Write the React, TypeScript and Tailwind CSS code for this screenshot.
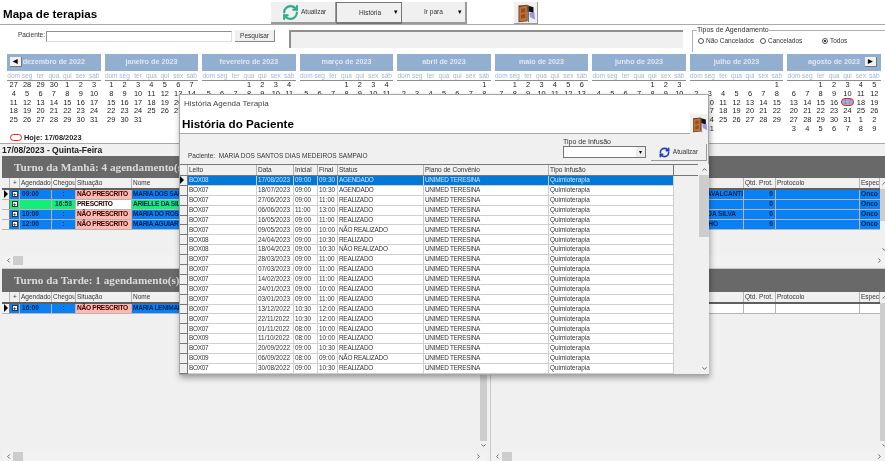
import { ChevronDown, ChevronLeft, ChevronRight, ChevronUp, RefreshCw } from 'lucide-react';

const MONTH_NAMES = ['janeiro', 'fevereiro', 'março', 'abril', 'maio', 'junho', 'julho', 'agosto', 'setembro', 'outubro', 'novembro', 'dezembro'];
const WEEK_DAYS = ['dom', 'seg', 'ter', 'qua', 'qui', 'sex', 'sáb'];
const CALENDAR = [
  [2022, 11],
  [2023, 0],
  [2023, 1],
  [2023, 2],
  [2023, 3],
  [2023, 4],
  [2023, 5],
  [2023, 6],
  [2023, 7],
];

const HISTORY = [
  ['BOX08', '17/08/2023', '09:00', '09:30', 'AGENDADO'],
  ['BOX07', '18/07/2023', '09:00', '10:30', 'AGENDADO'],
  ['BOX07', '27/06/2023', '09:00', '11:00', 'REALIZADO'],
  ['BOX07', '06/06/2023', '11:00', '13:00', 'REALIZADO'],
  ['BOX07', '16/05/2023', '09:00', '11:00', 'REALIZADO'],
  ['BOX07', '09/05/2023', '09:00', '10:00', 'NÃO REALIZADO'],
  ['BOX08', '24/04/2023', '09:00', '10:30', 'REALIZADO'],
  ['BOX08', '18/04/2023', '09:00', '10:30', 'NÃO REALIZADO'],
  ['BOX07', '28/03/2023', '09:00', '11:00', 'REALIZADO'],
  ['BOX07', '07/03/2023', '09:00', '11:00', 'REALIZADO'],
  ['BOX07', '14/02/2023', '09:00', '11:00', 'REALIZADO'],
  ['BOX07', '24/01/2023', '09:00', '10:00', 'REALIZADO'],
  ['BOX07', '03/01/2023', '09:00', '11:00', 'REALIZADO'],
  ['BOX07', '13/12/2022', '10:30', '12:00', 'REALIZADO'],
  ['BOX07', '22/11/2022', '10:30', '12:00', 'REALIZADO'],
  ['BOX07', '01/11/2022', '08:00', '10:00', 'REALIZADO'],
  ['BOX09', '11/10/2022', '08:00', '10:00', 'REALIZADO'],
  ['BOX07', '20/09/2022', '09:00', '10:30', 'REALIZADO'],
  ['BOX09', '06/09/2022', '08:00', '09:00', 'NÃO REALIZADO'],
  ['BOX07', '30/08/2022', '09:00', '10:30', 'REALIZADO'],
];

// column width + type for the history grid (caps are set tighter, as in the original font)
const HISTORY_COLS = [
  'w-[69px] tracking-[-0.25px]',
  'w-[37px]',
  'w-[24px]',
  'w-[20px]',
  'w-[86px] tracking-[-0.25px]',
  'w-[125px] tracking-[-0.25px]',
  'w-[125px]',
];

const MORNING = [
  { time: '09:00', arrived: ':', status: 'NÃO PRESCRITO', name: 'MARIA DOS SANTOS', tail: 'AVALCANTI', tailClass: '', current: true },
  { time: '', arrived: '16:53', status: 'PRESCRITO', name: 'ARIELLE DA SILVA', tail: '', tailClass: '', done: true },
  { time: '10:00', arrived: ':', status: 'NÃO PRESCRITO', name: 'MARIA DO ROSARIO', tail: 'DA SILVA', tailClass: 'pr-[7px]' },
  { time: '12:00', arrived: ':', status: 'NÃO PRESCRITO', name: 'MARIA AGUIAR', tail: 'HO', tailClass: 'pr-[25px]' },
];

function monthCells(year: number, month: number) {
  const first = new Date(year, month, 1).getDay();
  const total = new Date(year, month + 1, 0).getDate();
  const isFirst = year === 2022;
  const isLast = month === 7;
  const cells: string[] = [];
  const prevTotal = new Date(year, month, 0).getDate();
  for (let i = 0; i < first; i++) cells.push(isFirst ? String(prevTotal - first + i + 1) : '');
  for (let d = 1; d <= total; d++) cells.push(String(d));
  let next = 1;
  while (cells.length < 42) cells.push(isLast ? String(next++) : '');
  return cells;
}

function Door({ className }: { className: string }) {
  return (
    <svg viewBox="0 0 24 24" className={className}>
      <path d="M3 3 L14 2 L14 22 L3 23 Z" fill="#6a3d22" />
      <path d="M4 5 L13 3 L13 21 L4 22 Z" fill="#c96f3a" />
      <path d="M6 7 L11 6 L11 11 L6 12 Z M6 14 L11 13 L11 18 L6 19 Z" fill="#93501f" />
      <path d="M14 3 L21 5 L21 12 L14 10 Z" fill="#111" />
      <path d="M16 12 L22 11 L23 20 L17 17 Z" fill="#9a9ad6" />
      <path d="M15 3 L15 23" stroke="#555" strokeWidth="1" />
    </svg>
  );
}

function MonthCard({ year, month, index }: { year: number; month: number; index: number }) {
  const today = month === 7;
  return (
    <div className="flex flex-col">
      <div className="relative flex h-[17px] items-center justify-center bg-[#93afd0] text-[7.2px] font-bold text-[#dfe8f2]">
        {index === 0 && (
          <span className="absolute left-[3px] top-[3px] flex h-[10px] w-[12px] items-center justify-center border-r border-b border-[#777] bg-[#f0f0f0] text-[6px] text-black">◀</span>
        )}
        {MONTH_NAMES[month]} de {year}
        {index === 8 && (
          <span className="absolute right-[4px] top-[3px] flex h-[10px] w-[12px] items-center justify-center border-r border-b border-[#777] bg-[#f0f0f0] text-[6px] text-black">▶</span>
        )}
      </div>
      <div className="mt-[1px] grid h-[9px] grid-cols-7 items-center border-b border-[#8d8d8d] pt-[1px] text-center text-[6.5px] leading-none text-[#a3b7d3]">
        {WEEK_DAYS.map((d) => (
          <span key={d}>{d}</span>
        ))}
      </div>
      <div className="grid grid-cols-7 text-center text-[7.4px] leading-[8.8px] text-[#222]">
        {monthCells(year, month).map((d, i) => {
          const isToday = today && d === '17' && i < 28;
          return (
            <span key={i} className="relative h-[8.8px]">
              {isToday ? (
                <span className="absolute left-[0px] right-[0px] top-[-0.5px] flex h-[8px] items-center justify-center rounded-full border border-[#e8202a] bg-[#9ab3d6] text-[#6a85b0]">{d}</span>
              ) : (
                d
              )}
            </span>
          );
        })}
      </div>
    </div>
  );
}

function HScroll() {
  return (
    <div className="flex h-[10px] shrink-0 items-center bg-[#f2f2f2] text-[#555]">
      <ChevronLeft className="ml-[3px] h-[7px] w-[7px] shrink-0" strokeWidth={3} />
      <div className="ml-[1px] h-[9px] w-[10px] shrink-0 bg-[#cdcdcd]" />
      <div className="flex-1" />
      <ChevronRight className="mr-[5px] h-[7px] w-[7px] shrink-0" strokeWidth={3} />
    </div>
  );
}

function VScroll({ thumbClass, widthClass }: { thumbClass: string; widthClass: string }) {
  return (
    <div className={`flex shrink-0 flex-col items-center bg-[#f0f0f0] text-[#555] ${widthClass}`}>
      <ChevronUp className="mt-[2px] h-[7px] w-[7px] shrink-0" strokeWidth={3} />
      <div className={`mt-[2px] w-full shrink-0 bg-[#cdcdcd] ${thumbClass}`} />
      <div className="flex-1" />
      <ChevronDown className="mb-[2px] h-[7px] w-[7px] shrink-0" strokeWidth={3} />
    </div>
  );
}

function HeaderCell({ className, children }: { className: string; children?: React.ReactNode }) {
  return <div className={`flex h-full shrink-0 items-center overflow-hidden border-r border-[#b5b5b5] bg-[#f0f0f0] pl-[1px] text-[6.5px] whitespace-nowrap text-[#333] ${className}`}>{children}</div>;
}

function Pointer() {
  return <span className="block h-0 w-0 border-y-[4px] border-l-[4px] border-y-transparent border-l-black" />;
}

function Expander() {
  return (
    <span className="flex h-[6px] w-[6px] items-center justify-center border border-[#333] bg-white text-[6px] font-bold leading-none text-black">+</span>
  );
}

function LeftGridHeader() {
  return (
    <div className="flex h-[12px] shrink-0 border-b-2 border-[#5f5f5f]">
      <HeaderCell className="w-[8px]" />
      <HeaderCell className="w-[10px] justify-center">+</HeaderCell>
      <HeaderCell className="w-[32px]">Agendado</HeaderCell>
      <HeaderCell className="w-[24px]">Chegou</HeaderCell>
      <HeaderCell className="w-[56px]">Situação</HeaderCell>
      <HeaderCell className="flex-1">Nome</HeaderCell>
    </div>
  );
}

function LeftRow({ row }: { row: { time: string; arrived: string; status: string; name: string; current?: boolean; done?: boolean } }) {
  const fill = row.done ? 'bg-[#14ee78]' : 'bg-[#0a80f5]';
  return (
    <div className="flex h-[9.9px] shrink-0 border-b border-[#b5b5b5] text-[6.6px] leading-none font-bold tracking-[-0.3px] whitespace-nowrap text-[#04204f]">
      <div className="flex w-[8px] shrink-0 items-center justify-center border-r border-[#777] bg-[#f0f0f0]">{row.current && <Pointer />}</div>
      <div className={`flex w-[10px] shrink-0 items-center justify-center border-r border-[#b5b5b5] ${fill}`}>
        <Expander />
      </div>
      <div className={`flex w-[32px] shrink-0 items-center border-r border-[#b5b5b5] pl-[2px] tracking-normal ${fill}`}>{row.time}</div>
      <div className={`flex w-[24px] shrink-0 items-center justify-center border-r border-[#b5b5b5] tracking-normal ${fill}`}>{row.arrived}</div>
      <div className={`flex w-[56px] shrink-0 items-center border-r border-[#b5b5b5] pl-[1px] text-[#300] ${row.done ? 'bg-white' : 'bg-[#ffb7ae]'}`}>{row.status}</div>
      <div className={`flex flex-1 items-center pl-[1px] ${fill}`}>{row.name}</div>
    </div>
  );
}

function RightGridHeader() {
  return (
    <div className="flex h-[12px] shrink-0 border-b-2 border-[#5f5f5f]">
      <HeaderCell className="w-[253px]" />
      <HeaderCell className="w-[32px]">Qtd. Prot.</HeaderCell>
      <HeaderCell className="w-[84px]">Protocolo</HeaderCell>
      <HeaderCell className="flex-1">Espec</HeaderCell>
    </div>
  );
}

function RightRow({ tail, tailClass, empty }: { tail?: string; tailClass?: string; empty?: boolean }) {
  const fill = empty ? 'bg-white' : 'bg-[#0a80f5]';
  return (
    <div className="flex h-[9.9px] shrink-0 border-b border-[#b5b5b5] text-[6.6px] leading-none font-bold text-[#04204f]">
      <div className={`flex w-[253px] shrink-0 items-center justify-end border-r border-[#b5b5b5] tracking-[-0.1px] ${fill} ${tailClass}`}>{tail}</div>
      <div className={`flex w-[32px] shrink-0 items-center justify-end border-r border-[#b5b5b5] pr-[2px] ${fill}`}>{!empty && '0'}</div>
      <div className={`w-[84px] shrink-0 border-r border-[#b5b5b5] ${fill}`} />
      <div className={`flex flex-1 items-center pl-[1px] ${fill}`}>{!empty && 'Onco'}</div>
    </div>
  );
}

function ShiftBar({ title, className }: { title?: string; className: string }) {
  return (
    <div className={`flex shrink-0 items-center bg-[#696969] pl-[12px] font-['Liberation_Serif'] text-[11.2px] font-bold whitespace-nowrap text-[#dcdcdc] ${className}`}>{title}</div>
  );
}

function HistoryModal() {
  return (
    <div className="absolute left-[179px] top-[94px] flex h-[281px] w-[530px] flex-col border border-[#a5a5a5] bg-[#f0f0f0] shadow-[1px_3px_6px_rgba(0,0,0,0.35)]">
      <div className="relative h-[39px] shrink-0 border-b border-[#a9a9a9] bg-white">
        <div className="pl-[4px] pt-[4px] text-[8px] leading-[10px] text-[#444]">História Agenda Terapia</div>
        <div className="pl-[2px] pt-[7px] text-[11.65px] leading-[15px] font-bold text-black">História do Paciente</div>
        <div className="absolute right-0 top-[19px] flex h-[20px] w-[18px] items-center justify-center bg-[#f0f0f0]">
          <Door className="h-[17px] w-[17px]" />
        </div>
      </div>
      <div className="flex h-[30px] shrink-0">
        <div className="flex w-[383px] items-end pb-[5px] pl-[8px] text-[6.5px] leading-none text-[#333]">
          Paciente:&nbsp; MARIA DOS SANTOS DIAS MEDEIROS SAMPAIO
        </div>
        <div className="flex flex-col pt-[3px]">
          <span className="text-[7px] leading-[9px] text-[#333]">Tipo de Infusão</span>
          <div className="flex h-[12px] w-[83px] justify-end border border-[#777] bg-white">
            <span className="flex w-[9px] items-center justify-center bg-[#ededed] text-[6px] text-black">▾</span>
          </div>
        </div>
        <div className="ml-[5px] mt-[10px] flex h-[17px] w-[56px] items-center justify-center gap-[3px] border-r border-b border-[#9a9a9a] text-[6.5px] text-[#333]">
          <RefreshCw className="h-[11px] w-[11px] text-[#1b3fb5]" strokeWidth={3.5} />
          Atualizar
        </div>
      </div>
      <div className="flex min-h-0 flex-1">
        <div className="flex w-[518px] shrink-0 flex-col">
          <div className="flex h-[12px] shrink-0 border-y border-[#777]">
            <HeaderCell className="w-[8px]" />
            <HeaderCell className="w-[69px]">Leito</HeaderCell>
            <HeaderCell className="w-[37px]">Data</HeaderCell>
            <HeaderCell className="w-[24px]">Inicial</HeaderCell>
            <HeaderCell className="w-[20px]">Final</HeaderCell>
            <HeaderCell className="w-[86px]">Status</HeaderCell>
            <HeaderCell className="w-[125px]">Plano de Convênio</HeaderCell>
            <HeaderCell className="w-[125px] !border-r-[#777]">Tipo Infusão</HeaderCell>
          </div>
          {HISTORY.map((row, i) => (
            <div key={i} className="flex h-[9.9px] shrink-0 text-[6.4px] leading-none">
              <div className="flex w-[8px] shrink-0 items-center border-r border-b border-[#777] bg-[#f0f0f0]">{i === 0 && <Pointer />}</div>
              <div className={`flex shrink-0 ${i === 0 ? 'bg-[#0078d7] text-[#cfe4f7]' : 'bg-white text-[#333]'}`}>
                {[...row, 'UNIMED TERESINA', 'Quimioterapia'].map((cell, j) => (
                  <div key={j} className={`flex items-center border-r border-b border-[#cfcfcf] pl-[1px] whitespace-nowrap ${HISTORY_COLS[j]}`}>
                    {cell}
                  </div>
                ))}
              </div>
            </div>
          ))}
        </div>
        <div className="ml-[1px] flex flex-1 justify-end">
          <VScroll widthClass="w-[10px]" thumbClass="h-[62px]" />
        </div>
      </div>
    </div>
  );
}

export default function App() {
  return (
    <div className="relative flex h-[461px] w-[885px] flex-col overflow-hidden bg-[#f0f0f0] font-['Liberation_Sans',sans-serif] [filter:blur(0.3px)]">
      <div className="flex h-[25px] shrink-0 border-b border-[#a9a9a9] bg-white">
        <div className="w-[271px] pl-[3px] pt-[7px] text-[11.6px] leading-[14px] font-bold text-black">Mapa de terapias</div>
        <div className="mt-[2px] flex w-[65px] items-center gap-[2px] border-r border-b-2 border-[#9a9a9a] bg-[#f0f0f0] pl-[11px] text-[6.5px] text-[#333]">
          <RefreshCw className="h-[17px] w-[17px] shrink-0 text-[#2cae8c]" strokeWidth={3} />
          Atualizar
        </div>
        <div className="mt-[2px] flex w-[66px] items-center justify-between border border-b-2 border-[#777] bg-[#f0f0f0] pl-[22px] pr-[3px] text-[6.5px] text-[#333]">
          História <span className="text-[7px] text-black">▾</span>
        </div>
        <div className="mt-[2px] flex w-[65px] items-center justify-between border-r-2 border-b-2 border-[#9a9a9a] bg-[#f0f0f0] pl-[22px] pr-[3px] text-[6.5px] text-[#333]">
          Ir para <span className="text-[7px] text-black">▾</span>
        </div>
        <div className="ml-[47px] mt-[2px] flex h-[22px] w-[24px] items-center justify-center border-r border-b border-[#9a9a9a] bg-[#f0f0f0]">
          <Door className="h-[20px] w-[20px]" />
        </div>
      </div>

      <div className="flex h-[28px] shrink-0 bg-white text-[6.5px] text-[#333]">
        <div className="flex h-[17px] w-[46px] items-center justify-end pt-[3px] pr-[1px]">Paciente:</div>
        <div className="mt-[6px] h-[11px] w-[186px] border border-[#8f8f8f] border-b-[#ddd] border-r-[#ddd] bg-white" />
        <div className="ml-[3px] mt-[5px] flex h-[12px] w-[40px] items-center justify-center border-r border-b border-[#8a8a8a] bg-[#f0f0f0]">Pesquisar</div>
        <div className="ml-[14px] mt-[5px] h-[18px] w-[394px] border-t-2 border-l-2 border-[#8f8f8f] bg-[#f0f0f0]" />
        <fieldset className="ml-[9px] mt-[1px] h-[26px] flex-1 border-t border-l border-[#b0b0b0] bg-white pl-[5px]">
          <legend className="ml-[-1px] bg-white text-[7px] leading-[8px] text-[#333]">Tipos de Agendamento</legend>
          <div className="flex h-[14px] items-center text-[6.5px]">
            <span className="h-[6px] w-[6px] shrink-0 rounded-full border border-[#555] bg-white" />
            <span className="ml-[2px] w-[54px]">Não Cancelados</span>
            <span className="h-[6px] w-[6px] shrink-0 rounded-full border border-[#555] bg-white" />
            <span className="ml-[2px] w-[54px]">Cancelados</span>
            <span className="flex h-[6px] w-[6px] shrink-0 items-center justify-center rounded-full border border-[#555] bg-white">
              <span className="h-[2px] w-[2px] rounded-full bg-black" />
            </span>
            <span className="ml-[2px]">Todos</span>
          </div>
        </fieldset>
      </div>

      <div className="flex h-[91px] shrink-0 flex-col border-b border-[#a9a9a9] bg-white px-[7px] pt-[1px] pr-[4px]">
        <div className="grid grid-cols-9 gap-x-[3.7px]">
          {CALENDAR.map(([year, month], i) => (
            <MonthCard key={`${year}-${month}`} year={year} month={month} index={i} />
          ))}
        </div>
        <div className="mt-auto mb-[2px] flex items-center gap-[2px] pl-[3px] text-[7.4px] leading-[8px] font-bold text-[#222]">
          <span className="h-[7px] w-[12px] rounded-full border-[1.5px] border-[#e8202a]" />
          Hoje: 17/08/2023
        </div>
      </div>

      <div className="flex h-[12px] shrink-0 items-center pl-[2px] text-[8.5px] font-bold text-[#222]">17/08/2023 - Quinta-Feira</div>

      <div className="flex min-h-0 flex-1">
        <div className="flex w-[487px] shrink-0 flex-col pl-[2px]">
          <div className="flex h-[109px] shrink-0 flex-col">
            <ShiftBar title="Turno da Manhã: 4 agendamento(s)" className="h-[22px]" />
            <LeftGridHeader />
            {MORNING.map((row) => (
              <LeftRow key={row.name} row={row} />
            ))}
            <div className="flex-1" />
            <HScroll />
          </div>
          <div className="mt-[3px] flex flex-1 flex-col border-t border-[#c9c9c9]">
            <ShiftBar title="Turno da Tarde: 1 agendamento(s)" className="h-[23px]" />
            <div className="flex min-h-0 flex-1">
              <div className="flex flex-1 flex-col">
                <LeftGridHeader />
                <LeftRow row={{ time: '16:00', arrived: ':', status: 'NÃO PRESCRITO', name: 'MARIA LENIMAR', current: true }} />
              </div>
              <VScroll widthClass="w-[7px]" thumbClass="h-[138px]" />
            </div>
            <HScroll />
          </div>
        </div>

        <div className="ml-[3px] flex flex-1 flex-col border-l border-[#c9c9c9]">
          <div className="flex h-[109px] shrink-0 flex-col">
            <ShiftBar className="h-[22px]" />
            <div className="flex min-h-0 flex-1">
              <div className="flex flex-1 flex-col">
                <RightGridHeader />
                {MORNING.map((row) => (
                  <RightRow key={row.name} tail={row.tail} tailClass={row.tailClass} />
                ))}
              </div>
              <VScroll widthClass="w-[8px]" thumbClass="h-[32px]" />
            </div>
            <HScroll />
          </div>
          <div className="mt-[3px] flex flex-1 flex-col border-t border-[#c9c9c9]">
            <ShiftBar className="h-[23px]" />
            <div className="flex min-h-0 flex-1">
              <div className="flex flex-1 flex-col">
                <RightGridHeader />
                <RightRow empty />
              </div>
              <VScroll widthClass="w-[8px]" thumbClass="h-[138px]" />
            </div>
            <HScroll />
          </div>
        </div>
      </div>

      <HistoryModal />
    </div>
  );
}
